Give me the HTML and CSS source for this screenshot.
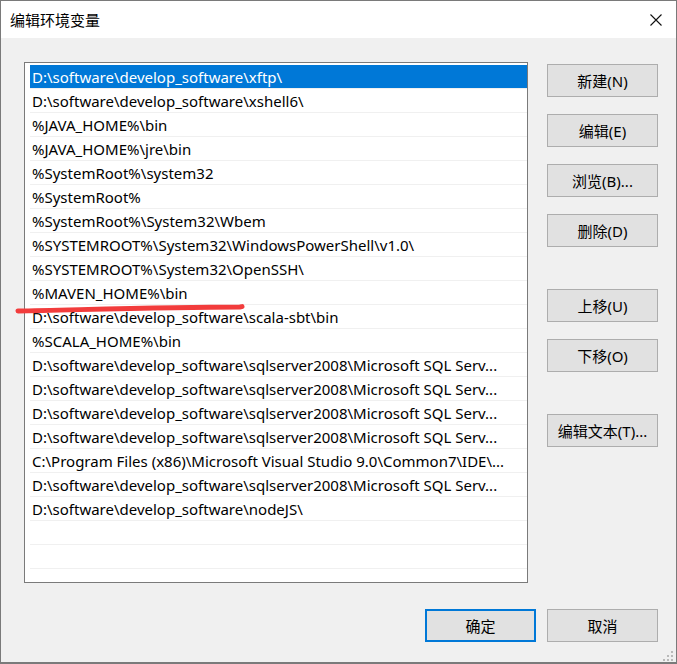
FILE: index.html
```html
<!DOCTYPE html>
<html lang="zh-CN">
<head>
    <meta charset="UTF-8">
    <meta name="viewport" content="width=device-width, initial-scale=1.0">
    <title>编辑环境变量</title>
    <link rel="stylesheet" href="styles.css">
</head>
<body>
    <div class="window">
        <div class="titlebar">
            <span class="title">编辑环境变量</span>
            <svg class="close" width="12" height="12" viewBox="0 0 12 12">
                <path d="M0.5 0.5 L11.5 11.5 M11.5 0.5 L0.5 11.5" stroke="#111" stroke-width="1.1" fill="none"/>
            </svg>
        </div>

        <div class="dialog">
            <div class="main">
                <div class="listbox">
                    <ul class="list">
                        <li class="selected">D:\software\develop_software\xftp\</li>
                        <li>D:\software\develop_software\xshell6\</li>
                        <li>%JAVA_HOME%\bin</li>
                        <li>%JAVA_HOME%\jre\bin</li>
                        <li>%SystemRoot%\system32</li>
                        <li>%SystemRoot%</li>
                        <li>%SystemRoot%\System32\Wbem</li>
                        <li>%SYSTEMROOT%\System32\WindowsPowerShell\v1.0\</li>
                        <li>%SYSTEMROOT%\System32\OpenSSH\</li>
                        <li>%MAVEN_HOME%\bin</li>
                        <li>D:\software\develop_software\scala-sbt\bin</li>
                        <li>%SCALA_HOME%\bin</li>
                        <li>D:\software\develop_software\sqlserver2008\Microsoft SQL Serv...</li>
                        <li>D:\software\develop_software\sqlserver2008\Microsoft SQL Serv...</li>
                        <li>D:\software\develop_software\sqlserver2008\Microsoft SQL Serv...</li>
                        <li>D:\software\develop_software\sqlserver2008\Microsoft SQL Serv...</li>
                        <li>C:\Program Files (x86)\Microsoft Visual Studio 9.0\Common7\IDE\...</li>
                        <li>D:\software\develop_software\sqlserver2008\Microsoft SQL Serv...</li>
                        <li>D:\software\develop_software\nodeJS\</li>
                        <li></li>
                        <li></li>
                        <li></li>
                    </ul>
                </div>

                <div class="side">
                    <button class="btn">新建(N)</button>
                    <button class="btn">编辑(E)</button>
                    <button class="btn">浏览(B)...</button>
                    <button class="btn">删除(D)</button>
                    <button class="btn spaced">上移(U)</button>
                    <button class="btn">下移(O)</button>
                    <button class="btn spaced">编辑文本(T)...</button>
                </div>
            </div>

            <div class="footer">
                <button class="btn default">确定</button>
                <button class="btn">取消</button>
            </div>
        </div>

        <!-- red marker under MAVEN_HOME -->
        <svg class="marker" width="240" height="14" viewBox="0 0 240 14">
            <path d="M3 9 C 60 8, 150 5, 225 5 L 227 4.6" stroke="#f23c3c" stroke-width="5" stroke-linecap="round" fill="none"/>
        </svg>

        <div class="grip">
            <span style="grid-area: 1 / 3"></span>
            <span style="grid-area: 2 / 2"></span>
            <span style="grid-area: 2 / 3"></span>
            <span style="grid-area: 3 / 1"></span>
            <span style="grid-area: 3 / 2"></span>
            <span style="grid-area: 3 / 3"></span>
        </div>
    </div>
</body>
</html>
```

FILE: styles.css
```css
:root {
    --face: #f0f0f0;
    --btn-face: #e1e1e1;
    --btn-border: #adadad;
    --accent: #0078d7;
}

* {
    box-sizing: border-box;
}

body {
    margin: 0;
    font-family: 'Noto Sans', 'Noto Sans CJK SC', sans-serif;
    font-size: 15px;
    color: #000;
}

.window {
    position: relative;
    width: 677px;
    height: 664px;
    border: 1px solid #7a7a7a;
    border-bottom-width: 2px;
    background: var(--face);
    display: flex;
    flex-direction: column;
}

.titlebar {
    height: 37px;
    background: #fff;
    display: flex;
    align-items: center;
    justify-content: space-between;
    padding: 0 14px 0 9px;
}

.title {
    font-family: 'Noto Sans CJK SC', sans-serif;
    font-size: 15px;
}

.close {
    display: block;
}

.dialog {
    flex: 1;
    padding: 24px 18px 0 23px;
    display: flex;
    flex-direction: column;
}

.main {
    display: flex;
    gap: 19px;
}

.listbox {
    width: 504px;
    height: 521px;
    border: 1px solid #7a7a7a;
    background: #fff;
    overflow: hidden;
    padding: 2px 0 0 5px;
}

.list {
    list-style: none;
    margin: 0;
    padding: 0;
}

.list li {
    height: 24px;
    line-height: 23px;
    padding-top: 1px;
    border-bottom: 1px solid #f0f0f0;
    padding-left: 2px;
    white-space: nowrap;
}

.list li.selected {
    background: linear-gradient(var(--accent) 23px, #f0f0f0 23px);
    color: #fff;
}

.side {
    display: flex;
    flex-direction: column;
    gap: 17px;
    padding-top: 2px;
}

.btn {
    width: 111px;
    height: 33px;
    padding: 0;
    background: var(--btn-face);
    border: 1px solid var(--btn-border);
    font-family: 'Noto Sans', 'Noto Sans CJK SC', sans-serif;
    font-size: 15px;
    color: #000;
}

.btn.spaced {
    margin-top: 25px;
}

.btn.default {
    border: 2px solid var(--accent);
}

.footer {
    display: flex;
    justify-content: flex-end;
    gap: 11px;
    margin-top: 26px;
}

.marker {
    position: absolute;
    left: 14px;
    top: 301px;
}

.grip {
    position: absolute;
    right: 3px;
    bottom: 1px;
    display: grid;
    grid-template-columns: repeat(3, 2px);
    grid-template-rows: repeat(3, 2px);
    gap: 2px;
}

.grip span {
    background: #b9b9b9;
}
```
